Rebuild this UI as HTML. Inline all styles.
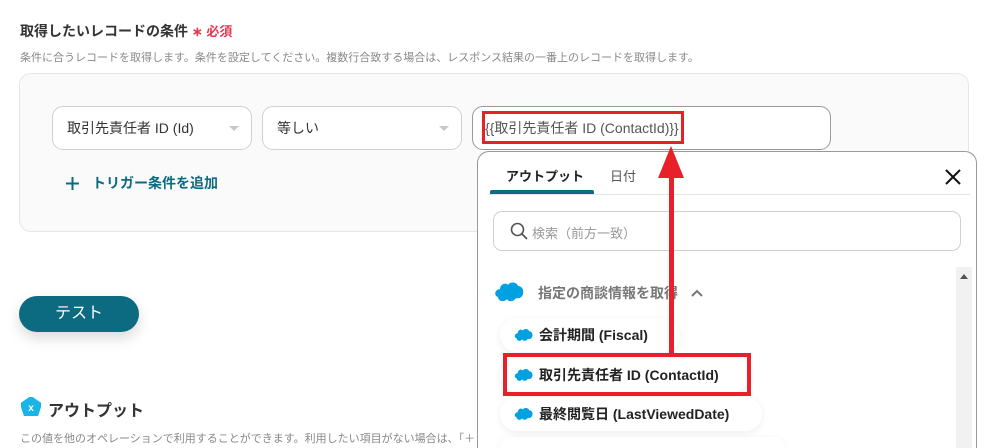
<!DOCTYPE html>
<html><head><meta charset="utf-8"><style>
*{margin:0;padding:0;box-sizing:border-box}
html,body{width:992px;height:448px;overflow:hidden}
body{background:#fff;font-family:"Liberation Sans","Noto Sans CJK JP",sans-serif;position:relative;color:#333}
.a{position:absolute;white-space:nowrap}
.sel{position:absolute;top:106px;height:44px;border:1px solid #d0d0d0;border-radius:11px;background:#fff;font-size:14px;line-height:42px;padding-left:14px;color:#333}
.caret{position:absolute;right:12px;top:19px;width:0;height:0;border-left:5px solid transparent;border-right:5px solid transparent;border-top:5px solid #c8c8c8}
.item{position:absolute;left:500px;height:34px;border-radius:17px;background:#fff;box-shadow:0 2px 8px rgba(0,0,0,.07);font-size:14px;font-weight:bold;line-height:34px;padding-left:39px;color:#222}
.cl{position:absolute;left:14px;top:10px}
</style></head><body>
<div class="a" style="left:20px;top:21px;font-size:14px;font-weight:bold;color:#333">取得したいレコードの条件 <span style="color:#e8384f;font-size:13px">∗ 必須</span></div>
<div class="a" style="left:20px;top:49px;font-size:11px;color:#888">条件に合うレコードを取得します。条件を設定してください。複数行合致する場合は、レスポンス結果の一番上のレコードを取得します。</div>
<div class="a" style="left:19px;top:73px;width:950px;height:159px;background:#fafafa;border:1px solid #e6e6e6;border-radius:12px"></div>
<div class="sel" style="left:52px;width:200px">取引先責任者 ID (Id)<div class="caret"></div></div>
<div class="sel" style="left:262px;width:200px">等しい<div class="caret"></div></div>
<div class="sel" style="left:472px;width:359px;border-color:#999;padding-left:12px;color:#555">{{取引先責任者 ID (ContactId)}}</div>
<svg class="a" style="left:66px;top:177px" width="13" height="13" viewBox="0 0 13 13"><path d="M6.5 0V13M0 6.5H13" stroke="#0d6b81" stroke-width="2"/></svg>
<div class="a" style="left:92px;top:173px;font-size:14px;font-weight:bold;color:#0d6b81">トリガー条件を追加</div>
<div class="a" style="left:19px;top:296px;width:120px;height:36px;border-radius:18px;background:#0d6b81;color:#fff;font-size:16px;line-height:36px;text-align:center;box-shadow:0 6px 14px rgba(0,0,0,.15)">テスト</div>
<svg class="a" style="left:21px;top:397px" width="20" height="19" viewBox="0 0 20 19"><polygon points="10,0 20,7 16,19 4,19 0,7" fill="#19b4e8" stroke="#19b4e8" stroke-linejoin="round" stroke-width="2"/><text x="10" y="14" font-size="10" font-weight="bold" fill="#fff" text-anchor="middle" font-family="Liberation Sans">x</text></svg>
<div class="a" style="left:48px;top:397px;font-size:16px;font-weight:bold;color:#333">アウトプット</div>
<div class="a" style="left:20px;top:430px;font-size:11px;color:#888">この値を他のオペレーションで利用することができます。利用したい項目がない場合は、「＋</div>
<div class="a" style="left:477px;top:151px;width:500px;height:297px;background:#fff;border:1px solid #999;border-bottom:none;border-radius:12px 12px 0 0;overflow:hidden"></div>
<div class="a" style="left:506px;top:166px;font-size:13px;font-weight:bold;color:#222">アウトプット</div>
<div class="a" style="left:610px;top:166px;font-size:13px;color:#555">日付</div>
<div class="a" style="left:488px;top:194px;width:482px;height:1px;background:#e4e4e4"></div>
<div class="a" style="left:490px;top:190px;width:104px;height:4px;background:#0d6b81;border-radius:2px 2px 0 0"></div>
<svg class="a" style="left:944px;top:168px" width="18" height="18" viewBox="0 0 18 18"><path d="M2 2L16 16M16 2L2 16" stroke="#111" stroke-width="2"/></svg>
<div class="a" style="left:493px;top:211px;width:468px;height:40px;border:1px solid #d0d0d0;border-radius:9px"></div>
<svg class="a" style="left:510px;top:222px" width="18" height="18" viewBox="0 0 18 18"><circle cx="7.5" cy="7.5" r="6" fill="none" stroke="#555" stroke-width="1.6"/><path d="M12 12L17 17" stroke="#555" stroke-width="1.8"/></svg>
<div class="a" style="left:532px;top:223px;font-size:13px;color:#999">検索（前方一致）</div>
<div class="a" style="left:956px;top:267px;width:16px;height:181px;background:#f1f1f1"></div>
<div class="a" style="left:960px;top:274px;width:0;height:0;border-left:4px solid transparent;border-right:4px solid transparent;border-bottom:5px solid #555"></div>
<svg class="a" style="left:494px;top:281px" width="30" height="22" viewBox="0 0 30 22"><path d="M6 8C6 3 12 1 14 4C16 0 23 1 24 5C28 5 30 9 29 13C28 17 24 18 22 17C20 21 14 21 13 18C10 22 4 20 4 16C0 15 0 9 6 8Z" fill="#00a1e0"/></svg>
<div class="a" style="left:538px;top:283px;font-size:14px;font-weight:bold;color:#777">指定の商談情報を取得</div>
<svg class="a" style="left:691px;top:289px" width="12" height="8" viewBox="0 0 12 8"><path d="M1 7L6 2L11 7" stroke="#777" stroke-width="2" fill="none"/></svg>
<div class="item" style="top:318px;width:180px"><svg class="cl" width="19" height="14" viewBox="0 0 30 22"><path d="M6 8C6 3 12 1 14 4C16 0 23 1 24 5C28 5 30 9 29 13C28 17 24 18 22 17C20 21 14 21 13 18C10 22 4 20 4 16C0 15 0 9 6 8Z" fill="#00a1e0"/></svg>会計期間 (Fiscal)</div>
<div class="item" style="top:358px;width:250px"><svg class="cl" width="19" height="14" viewBox="0 0 30 22"><path d="M6 8C6 3 12 1 14 4C16 0 23 1 24 5C28 5 30 9 29 13C28 17 24 18 22 17C20 21 14 21 13 18C10 22 4 20 4 16C0 15 0 9 6 8Z" fill="#00a1e0"/></svg>取引先責任者 ID (ContactId)</div>
<div class="item" style="top:397px;width:262px"><svg class="cl" width="19" height="14" viewBox="0 0 30 22"><path d="M6 8C6 3 12 1 14 4C16 0 23 1 24 5C28 5 30 9 29 13C28 17 24 18 22 17C20 21 14 21 13 18C10 22 4 20 4 16C0 15 0 9 6 8Z" fill="#00a1e0"/></svg>最終閲覧日 (LastViewedDate)</div>
<div class="item" style="top:437px;width:285px;height:11px;border-radius:17px 17px 0 0"></div>
<div class="a" style="left:482px;top:111px;width:202px;height:33px;border:3px solid #e8202a"></div>
<div class="a" style="left:503px;top:353px;width:248px;height:43px;border:4px solid #e8202a"></div>
<div class="a" style="left:669px;top:175px;width:5px;height:180px;background:#e8202a"></div>
<svg class="a" style="left:658px;top:146px" width="26" height="32" viewBox="0 0 26 32"><polygon points="13,0 26,32 0,32" fill="#e8202a"/></svg>
</body></html>
